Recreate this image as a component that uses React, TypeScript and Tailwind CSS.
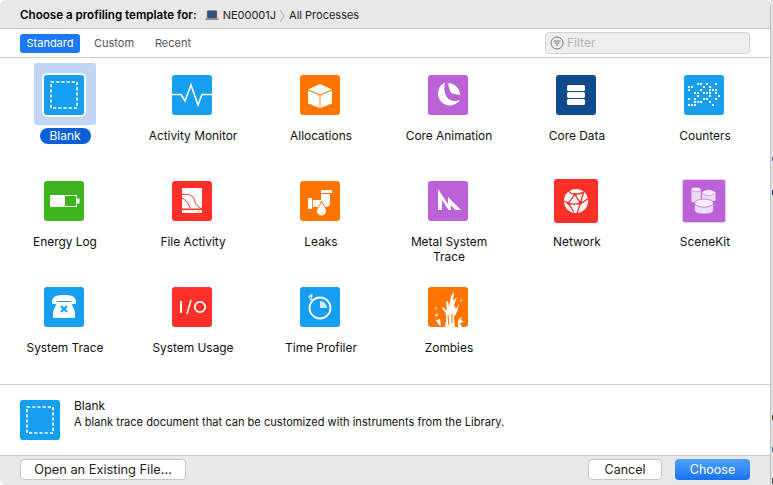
const BLUE = "bg-[#169ff0]";
const ORANGE = "bg-[#ff7500]";
const RED = "bg-[#ff3029]";
const PURPLE = "bg-[#bb62d6]";

function Tile({ color, size = "w-10 h-10", children }: { color: string, size?: string, children: React.ReactNode }) {
    return (
        <div className={`${size} ${color} rounded-[3px] flex items-center justify-center overflow-hidden`}>
            {children}
        </div>
    );
}

function Glyph({ children }: { children: React.ReactNode }) {
    return <svg viewBox="0 0 40 40" className="w-full h-full">{children}</svg>;
}

const blankGlyph = (
    <Glyph>
        <rect x="7" y="7" width="26" height="26" fill="none" stroke="#fff" strokeWidth="1.6" strokeDasharray="3.2 2" />
    </Glyph>
);

const counterRows = [
    "...xx.x..x.",
    "xx...x.x...",
    "x...x..xxx.",
    "..xx.xxx.x.",
    "...x...x..x",
    "x.x..xx..x.",
    "..xxx..x...",
    "xxx.....x..",
];

const templates: { name: string, icon: React.ReactNode }[] = [
    {
        name: "Activity Monitor",
        icon: (
            <Tile color={BLUE}>
                <Glyph>
                    <path d="M0 19.5H9L13 26L19 10L26 30L30 19.5H40" fill="none" stroke="#fff" strokeWidth="1.6" />
                </Glyph>
            </Tile>
        ),
    },
    {
        name: "Allocations",
        icon: (
            <Tile color={ORANGE}>
                <Glyph>
                    <path d="M8 14.5L20 9L32 14.5L20 19.5Z" fill="#fff" />
                    <path d="M8 15.5L19.6 20.5V33L8 28.5Z" fill="#fff" />
                    <path d="M20.4 20.5L32 15.5V28.5L20.4 33Z" fill="#fff" />
                </Glyph>
            </Tile>
        ),
    },
    {
        name: "Core Animation",
        icon: (
            <Tile color={PURPLE}>
                <Glyph>
                    <path d="M17 7.5A12 12 0 1 0 32 25C27 27 22 25.5 19.5 23C16.5 19.5 15.5 13 17 7.5Z" fill="#fff" />
                    <path d="M20.5 8C26 8 32 13 32 20L24 18.5C21.5 16 20 12 20.5 8Z" fill="#fff" />
                </Glyph>
            </Tile>
        ),
    },
    {
        name: "Core Data",
        icon: (
            <Tile color="bg-[#0f4a8c]">
                <Glyph>
                    <rect x="11" y="10" width="18" height="6" rx="1.5" fill="#fff" />
                    <rect x="11" y="17" width="18" height="6" rx="1.5" fill="#fff" />
                    <rect x="11" y="24" width="18" height="6" rx="1.5" fill="#fff" />
                </Glyph>
            </Tile>
        ),
    },
    {
        name: "Counters",
        icon: (
            <Tile color={BLUE}>
                <Glyph>
                    {counterRows.map((row, y) =>
                        row.split("").map((cell, x) =>
                            cell === "x" ? <rect key={`${x}-${y}`} x={4 + x * 3} y={8 + y * 3} width="2" height="2" fill="#fff" /> : null
                        )
                    )}
                </Glyph>
            </Tile>
        ),
    },
    {
        name: "Energy Log",
        icon: (
            <Tile color="bg-[#3eb41f]">
                <Glyph>
                    <path d="M7 14H33V26H7C6 26 6 25 6 25V15C6 15 6 14 7 14Z" fill="#fff" />
                    <path d="M33 17.5H35.5V22.5H33Z" fill="#fff" />
                    <rect x="21" y="15" width="11" height="10" fill="#3eb41f" />
                </Glyph>
            </Tile>
        ),
    },
    {
        name: "File Activity",
        icon: (
            <Tile color={RED}>
                <Glyph>
                    <path d="M10 7H30V27.5H10Z" fill="#fff" />
                    <path d="M10 29H30V32H10Z" fill="#fff" />
                    <path d="M10 13.5C17 13 21 14 22.5 19C23.5 24 26 26.5 30 27.5" fill="none" stroke="#ff3029" strokeWidth="1" />
                    <path d="M10 17C14 19 17 23 18 27.5" fill="none" stroke="#ff3029" strokeWidth="1" />
                    <circle cx="27" cy="30.5" r="0.6" fill="#ff3029" />
                </Glyph>
            </Tile>
        ),
    },
    {
        name: "Leaks",
        icon: (
            <Tile color={ORANGE}>
                <Glyph>
                    <rect x="8" y="17" width="4" height="11" fill="#fff" />
                    <rect x="21" y="9" width="11" height="3" fill="#fff" />
                    <path d="M12.8 19H21V13H30V22C30 25 28 26 26 26H12.8Z" fill="#fff" />
                    <path d="M21.5 20C23 25 26.5 27 26.5 30A5 5 0 0 1 16.5 30C16.5 27 20 25 21.5 20Z" fill="#fff" stroke="#ff7500" strokeWidth="1" />
                </Glyph>
            </Tile>
        ),
    },
    {
        name: "Metal System Trace",
        icon: (
            <Tile color={PURPLE}>
                <Glyph>
                    <path d="M10 8L20 23V16L33 29H27.5L23 24.5V29H20.5L14 19V29H10Z" fill="#fff" />
                </Glyph>
            </Tile>
        ),
    },
    {
        name: "Network",
        icon: (
            <Tile color={RED} size="w-11 h-11">
                <Glyph>
                    <circle cx="20" cy="20" r="11" fill="#fff" />
                    <path d="M13 11C15 13 17 14 19 14C22 14 25 13 27 12M19 14L13 22L9 20M13 22C17 23 21 23 24 22C27 21 29 19 31 18M24 22L21 31M24 22L19 14M13 22L18 30M27 12L24 22" fill="none" stroke="#ff3029" strokeWidth="1.2" />
                    <circle cx="19" cy="14" r="1.5" fill="#ff3029" />
                    <circle cx="24" cy="22" r="1.5" fill="#ff3029" />
                    <circle cx="13" cy="22" r="1.3" fill="#ff3029" />
                </Glyph>
            </Tile>
        ),
    },
    {
        name: "SceneKit",
        icon: (
            <Tile color={PURPLE} size="w-11 h-11 border border-[#e6c8f0]">
                <Glyph>
                    <path d="M8 9V20C8 22 17 22 17 20V9Z" fill="#f0d9f7" />
                    <ellipse cx="12.5" cy="9" rx="4.5" ry="2" fill="#f8eefb" stroke="#bb62d6" strokeWidth="0.5" />
                    <path d="M18 12V20H31V12Z" fill="#f0d9f7" />
                    <ellipse cx="24.5" cy="12" rx="6.5" ry="2.6" fill="#f8eefb" stroke="#bb62d6" strokeWidth="0.5" />
                    <path d="M11 22V29C11 33.5 29 33.5 29 29V22Z" fill="#f0d9f7" stroke="#bb62d6" strokeWidth="0.6" />
                    <ellipse cx="20" cy="22" rx="9" ry="3.8" fill="#f8eefb" stroke="#bb62d6" strokeWidth="0.7" />
                </Glyph>
            </Tile>
        ),
    },
    {
        name: "System Trace",
        icon: (
            <Tile color={BLUE}>
                <Glyph>
                    <path d="M8 15C8 9 13 8 20 8C27 8 32 9 32 15V17H27V14H13V17H8Z" fill="#fff" />
                    <path d="M13 15H27L31 25V30C31 30.5 30.5 31 30 31H10C9.5 31 9 30.5 9 30V25Z" fill="#fff" />
                    <path d="M17 19L23 25M23 19L17 25" stroke="#169ff0" strokeWidth="2" />
                </Glyph>
            </Tile>
        ),
    },
    {
        name: "System Usage",
        icon: (
            <Tile color={RED}>
                <Glyph>
                    <rect x="8" y="14" width="2" height="12" fill="#fff" />
                    <path d="M19 13L15 27" stroke="#fff" strokeWidth="1.6" />
                    <circle cx="28" cy="20" r="5.2" fill="none" stroke="#fff" strokeWidth="1.7" />
                </Glyph>
            </Tile>
        ),
    },
    {
        name: "Time Profiler",
        icon: (
            <Tile color={BLUE}>
                <Glyph>
                    <circle cx="20" cy="21" r="10.5" fill="none" stroke="#fff" strokeWidth="1.8" />
                    <path d="M20 14A7 7 0 0 1 27 21H20Z" fill="#cfeafb" />
                    <path d="M10 8L12 10M8.5 10.5L12.5 7.5M12 11L10 13" stroke="#fff" strokeWidth="1.5" />
                </Glyph>
            </Tile>
        ),
    },
    {
        name: "Zombies",
        icon: (
            <Tile color={ORANGE}>
                <Glyph>
                    <path d="M17 40C18 34 19 30 17 25L13 20L16 21L19 24L18 15L20 14L21 20L23 9L26 5L25 14L29 10L26 18L28 22L31 17L29 25L26 30L27 40Z" fill="#fff" />
                    <path d="M20 28L21 38M24 27L24 36" stroke="#ff7500" strokeWidth="1" />
                    <path d="M7 28L10 26L9 30ZM8 33L12 32L13 39L10 37ZM30 33L34 30L33 33L36 35L32 36L34 40H30ZM32 13L34 12L33 15ZM7 20L9 21L8 23Z" fill="#fff" />
                </Glyph>
            </Tile>
        ),
    },
];

function TemplateCell({ name, icon }: { name: string, icon: React.ReactNode }) {
    return (
        <div className="flex flex-col items-center pt-[5px]">
            <div className="w-[62px] h-[62px] pt-[2px] flex items-center justify-center">{icon}</div>
            <div className="mt-[3px] ml-[2px] max-w-[100px] text-center text-[11.9px] leading-[15px] text-[#111]">{name}</div>
        </div>
    );
}

export default function App() {
    return (
        <div className="relative w-[773px] h-[485px] flex bg-white overflow-hidden font-['Inter',sans-serif]">
            <div className="w-[771px] h-[485px] shrink-0 flex flex-col border-r border-[#bdbdbd] rounded-t-[6px] rounded-bl-[6px] overflow-hidden">
                <div className="h-[29px] shrink-0 flex items-center pt-[3px] pl-5 text-[11px] text-[#222] bg-[#e8e8e8] border-b border-[#c8c8c8]">
                    <span className="font-semibold text-[11.6px] text-black">Choose a profiling template for:</span>
                    <svg viewBox="0 0 16 12" className="w-[14px] h-[11px] ml-2">
                        <rect x="2.5" y="0.5" width="11" height="8.5" rx="0.8" fill="#2f4f7c" stroke="#555" strokeWidth="0.6" />
                        <rect x="0.5" y="9" width="15" height="2" rx="0.8" fill="#8a8a8a" />
                    </svg>
                    <span className="ml-[4px]">NE00001J</span>
                    <svg viewBox="0 0 6 14" className="w-[6px] h-[14px] ml-[3px] mr-1">
                        <path d="M1 1L5 7L1 13" fill="none" stroke="#aaa" strokeWidth="1" />
                    </svg>
                    <span>All Processes</span>
                </div>
                <div className="h-[29px] shrink-0 flex items-center pl-5 pr-5 text-[11px] text-[#555] border-b border-[#cdcdcd]">
                    <div className="w-[60px] h-[19px] rounded-[3px] bg-[#1c78f5] text-white flex items-center justify-center">Standard</div>
                    <div className="w-[60px] text-center ml-[4px]">Custom</div>
                    <div className="w-[60px] text-center -ml-px">Recent</div>
                    <div className="ml-auto w-[205px] h-[22px] flex items-center gap-[3px] pl-1 rounded-[4px] border border-[#d2d2d2] bg-[#eeeeee] text-[#b5b5b5] text-[12px]">
                        <svg viewBox="0 0 14 14" className="w-[14px] h-[14px]">
                            <circle cx="7" cy="7" r="6" fill="none" stroke="#777" strokeWidth="1" />
                            <path d="M3.5 5H10.5M4.5 7H9.5M6 9H8" stroke="#777" strokeWidth="1" />
                        </svg>
                        Filter
                    </div>
                </div>
                <div className="flex-1 grid grid-cols-[repeat(6,128px)] auto-rows-[106px] content-start">
                    <div className="flex flex-col items-center pt-[5px]">
                        <div className="w-[62px] h-[62px] ml-[2px] pr-[2px] pt-[2px] bg-[#c0d6f4] rounded-[3px] flex items-center justify-center">
                            <div className="w-11 h-11 rounded-[5px] border-2 border-white">
                                <div className={`w-10 h-10 ${BLUE} rounded-[3px]`}>{blankGlyph}</div>
                            </div>
                        </div>
                        <div className="mt-[3px] ml-[2px] w-[51px] h-[16px] rounded-full bg-[#0a60d8] text-white text-center text-[12px] leading-[16px]">Blank</div>
                    </div>
                    {templates.map((t) => (
                        <TemplateCell key={t.name} name={t.name} icon={t.icon} />
                    ))}
                </div>
                <div className="h-[71px] shrink-0 flex items-center pl-5 border-t border-[#cfcfcf]">
                    <Tile color={BLUE}>{blankGlyph}</Tile>
                    <div className="ml-[14px] mb-[12px] text-[#111]">
                        <div className="text-[12px] leading-[15px]">Blank</div>
                        <div className="text-[11.1px] leading-[15px] mt-[2px]">A blank trace document that can be customized with instruments from the Library.</div>
                    </div>
                </div>
                <div className="h-[30px] shrink-0 flex items-start pt-[3px] pl-5 pr-5 bg-[#e8e8e8] border-t border-[#c8c8c8] text-[12.5px]">
                    <button className="w-[166px] h-[21px] bg-white rounded-[4px] border border-[#c6c6c6] text-[#222] text-[12.8px] leading-[19px]">Open an Existing File...</button>
                    <button className="ml-auto w-[74px] h-[21px] bg-white rounded-[4px] border border-[#c6c6c6] text-[#222] leading-[19px]">Cancel</button>
                    <button className="ml-[13px] w-[75px] h-[21px] rounded-[4px] bg-gradient-to-b from-[#4ea0fb] to-[#1672f3] text-white leading-[21px]">Choose</button>
                </div>
            </div>
            <div className="w-[2px] h-full bg-[#e4e4e4]" />
            <span className="absolute right-0 top-[157px] w-px h-[4px] bg-[#6a5fc0]" />
            <span className="absolute right-0 top-[190px] w-px h-[5px] bg-[#1f2f7a]" />
            <span className="absolute right-0 top-[415px] w-px h-[5px] bg-[#7a2a10]" />
            <span className="absolute right-0 top-[447px] w-px h-[5px] bg-[#3d7a8a]" />
            <span className="absolute right-0 top-[478px] w-px h-[6px] bg-[#444]" />
        </div>
    );
}
